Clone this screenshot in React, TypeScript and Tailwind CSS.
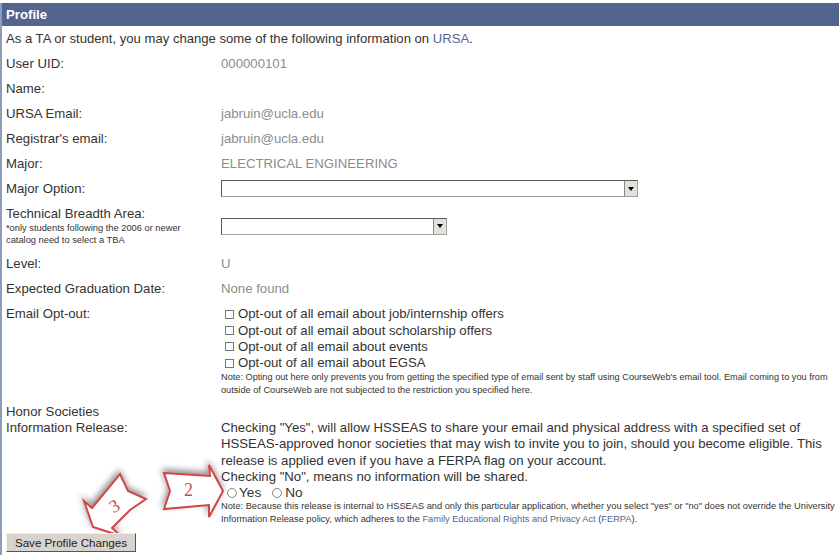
import React from "react";

function Row({ label, children, cls = "h-[25px]" }: { label: React.ReactNode; children?: React.ReactNode; cls?: string }) {
  return (
    <div className={`flex items-center ${cls}`}>
      <div className="w-[215px] shrink-0">{label}</div>
      <div className="text-[#8c8c8c]">{children}</div>
    </div>
  );
}

function Select({ w }: { w: string }) {
  return (
    <div className={`${w} h-[17px] flex justify-end bg-white border border-[#a0a0a0] border-t-[#5a5a5a] border-l-[#5a5a5a]`}>
      <div className="w-[13px] h-full bg-[#e4e1da] border-l border-[#8a8a8a] flex items-center justify-center">
        <div className="w-0 h-0 border-x-[3px] border-x-transparent border-t-[4px] border-t-black" />
      </div>
    </div>
  );
}

function Opt({ t }: { t: string }) {
  return (
    <div className="flex items-center h-[16.4px]">
      <span className="w-[9px] h-[9px] border border-[#777] bg-white ml-[4px] mr-[4px] shrink-0" />
      <span>{t}</span>
    </div>
  );
}

function Radio() {
  return <span className="inline-block w-[10px] h-[10px] rounded-full border border-[#888] bg-white shrink-0" />;
}

export default function App() {
  return (
    <div className="relative w-[839px] h-[555px] overflow-hidden bg-white text-[13.2px] leading-[16px] text-[#333] font-['Liberation_Sans',Arial,sans-serif]">
      <div className="h-[3px]" />
      <div className="h-[23px] bg-[#53658f] text-white font-bold pl-[5px] flex items-center ml-[1px]">Profile</div>
      <div className="absolute left-0 top-[3px] bottom-0 w-[2px] bg-[#8e9cbc]" />
      <div className="pl-[6px]">
        <div className="h-[25px] pt-[1px] flex items-center text-[13.1px]">
          <span>As a TA or student, you may change some of the following information on <span className="text-[#53658f]">URSA</span>.</span>
        </div>
        <Row label="User UID:">000000101</Row>
        <Row label="Name:" />
        <Row label="URSA Email:">jabruin@ucla.edu</Row>
        <Row label="Registrar's email:">jabruin@ucla.edu</Row>
        <Row label="Major:">ELECTRICAL ENGINEERING</Row>
        <Row label="Major Option:"><Select w="w-[417px]" /></Row>
        <div className="flex items-center h-[50px]">
          <div className="w-[215px] shrink-0">
            <div>Technical Breadth Area:</div>
            <div className="text-[9.3px] leading-[12px] w-[185px]">*only students following the 2006 or newer catalog need to select a TBA</div>
          </div>
          <Select w="w-[226px]" />
        </div>
        <Row label="Level:">U</Row>
        <Row label="Expected Graduation Date:">None found</Row>
        <div className="flex pt-[5px] h-[103px]">
          <div className="w-[215px] shrink-0">Email Opt-out:</div>
          <div className="flex-1">
            <Opt t="Opt-out of all email about job/internship offers" />
            <Opt t="Opt-out of all email about scholarship offers" />
            <Opt t="Opt-out of all email about events" />
            <Opt t="Opt-out of all email about EGSA" />
            <div className="text-[9.2px] leading-[13px] -mt-[1px]">Note: Opting out here only prevents you from getting the specified type of email sent by staff using CourseWeb's email tool. Email coming to you from outside of CourseWeb are not subjected to the restriction you specified here.</div>
          </div>
        </div>
        <div className="flex">
          <div className="w-[215px] shrink-0">
            <div>Honor Societies</div>
            <div>Information Release:</div>
          </div>
          <div className="flex-1 pt-[16px]">
            <div className="leading-[16.3px]">
              <div>Checking "Yes", will allow HSSEAS to share your email and physical address with a specified set of HSSEAS-approved honor societies that may wish to invite you to join, should you become eligible. This release is applied even if you have a FERPA flag on your account.</div>
              <div>Checking "No", means no information will be shared.</div>
              <div className="flex items-center h-[16px] pl-[6px] text-[13.6px]">
                <Radio /><span className="ml-[2px]">Yes</span>
                <span className="ml-[11px] flex items-center"><Radio /></span><span className="ml-[3px]">No</span>
              </div>
            </div>
            <div className="text-[9.25px] leading-[13px] -mt-[1px]">Note: Because this release is internal to HSSEAS and only this particular application, whether you select "yes" or "no" does not override the University Information Release policy, which adheres to the <span className="text-[#53658f]">Family Educational Rights and Privacy Act</span> (<span className="text-[#53658f]">FERPA</span>).</div>
          </div>
        </div>
        <button className="relative z-10 block mt-[7px] w-[130px] h-[19px] bg-[#d8d4cd] border border-[#eee] border-r-[#555] border-b-[#555] text-[11.6px] text-[#222] leading-none">Save Profile Changes</button>
      </div>

      <svg className="absolute left-0 top-0 pointer-events-none" width="839" height="555">
        <defs>
          <filter id="s" x="-30%" y="-30%" width="160%" height="160%"><feDropShadow dx="-1" dy="-3" stdDeviation="3" floodColor="#000" floodOpacity="0.45" /></filter>
        </defs>
        <polygon points="164,473 210,476 209,465 223,491 209,517 209,505 164,509 170,491" fill="#fff" stroke="#d04545" strokeWidth="2" filter="url(#s)" />
        <polygon points="120,474 128,491 146,499 130,510 112,528 121,536 93,527 84,501 92,508" fill="#fff" stroke="#d04545" strokeWidth="2" filter="url(#s)" />
      </svg>
      <span className="absolute left-[184px] top-[480px] text-[18px] leading-[20px] text-[#c94f4f] font-['Liberation_Serif',serif]">2</span>
      <span className="absolute left-[110px] top-[496px] text-[18px] leading-[20px] text-[#c94f4f] font-['Liberation_Serif',serif] rotate-[-30deg]">3</span>
    </div>
  );
}
